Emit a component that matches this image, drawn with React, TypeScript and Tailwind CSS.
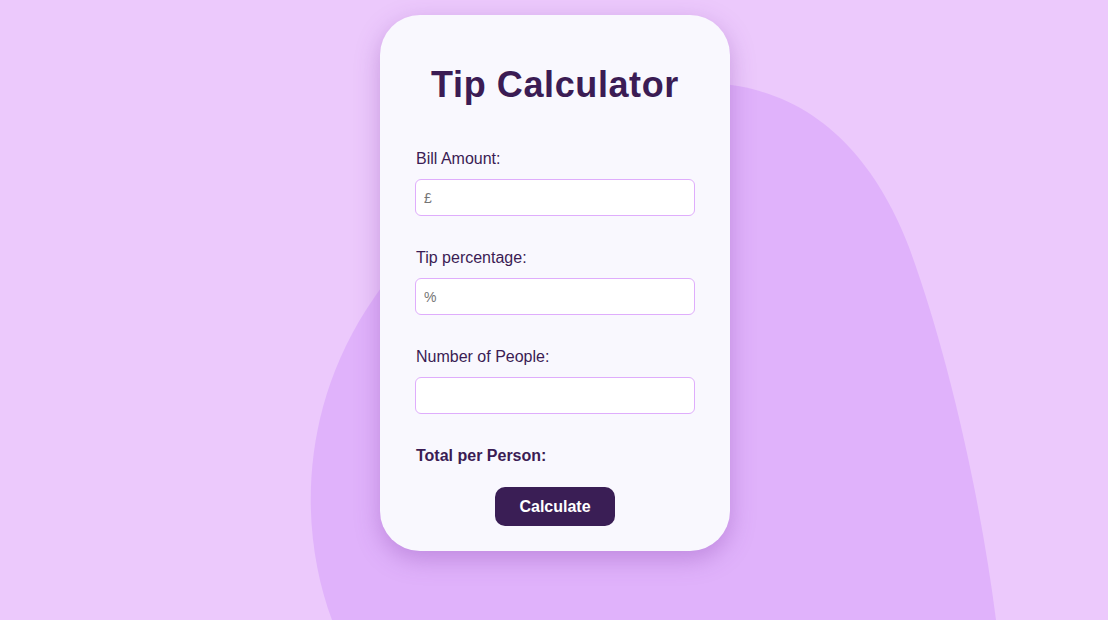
import React from "react";

export default function App() {
  return (
    <div
      className="relative w-full min-h-[620px] h-[620px] overflow-hidden bg-[#ecc9fc]"
      style={{ fontFamily: '"Liberation Sans", Arial, sans-serif' }}
    >
      <svg
        className="absolute inset-0 pointer-events-none"
        width="1108"
        height="620"
        viewBox="0 0 1108 620"
      >
        <path
          d="M 332 620 C 302 540, 296 420, 366 310 C 436 200, 580 80, 710 83 C 815 88, 876 160, 910 250 C 943 340, 978 480, 996 620 Z"
          fill="#e0b2fb"
        />
      </svg>
      <div className="relative flex justify-center pt-[15px] pl-[2px]">
        <div className="w-[350px] h-[536px] rounded-[40px] bg-[#f9f8fe] shadow-[0_8px_24px_rgba(130,60,170,0.35)] px-[35px] pt-[50px] flex flex-col text-[#3b1c54]">
          <h1 className="text-[36px] leading-[40px] font-black text-center tracking-[0.6px]">
            Tip Calculator
          </h1>
          <div className="mt-[45px] flex flex-col">
            <label className="text-[16px] leading-[18px] pl-[1px]">Bill Amount:</label>
            <input
              type="text"
              placeholder="£"
              className="mt-[11px] h-[37px] w-[280px] rounded-[6px] border border-[#dfadfc] bg-white px-[8px] text-[14px] placeholder:text-[#757575] outline-none"
            />
            <label className="mt-[33px] text-[16px] leading-[18px] pl-[1px]">Tip percentage:</label>
            <input
              type="text"
              placeholder="%"
              className="mt-[11px] h-[37px] w-[280px] rounded-[6px] border border-[#dfadfc] bg-white px-[8px] text-[14px] placeholder:text-[#757575] outline-none"
            />
            <label className="mt-[33px] text-[16px] leading-[18px] pl-[1px]">Number of People:</label>
            <input
              type="text"
              className="mt-[11px] h-[37px] w-[280px] rounded-[6px] border border-[#dfadfc] bg-white px-[8px] text-[14px] outline-none"
            />
            <p className="mt-[33px] text-[16px] leading-[18px] font-bold pl-[1px]">Total per Person:</p>
            <div className="mt-[22px] flex justify-center">
              <button className="w-[120px] h-[39px] rounded-[10px] bg-[#3a1e55] text-white text-[16px] font-bold">
                Calculate
              </button>
            </div>
          </div>
        </div>
      </div>
    </div>
  );
}
